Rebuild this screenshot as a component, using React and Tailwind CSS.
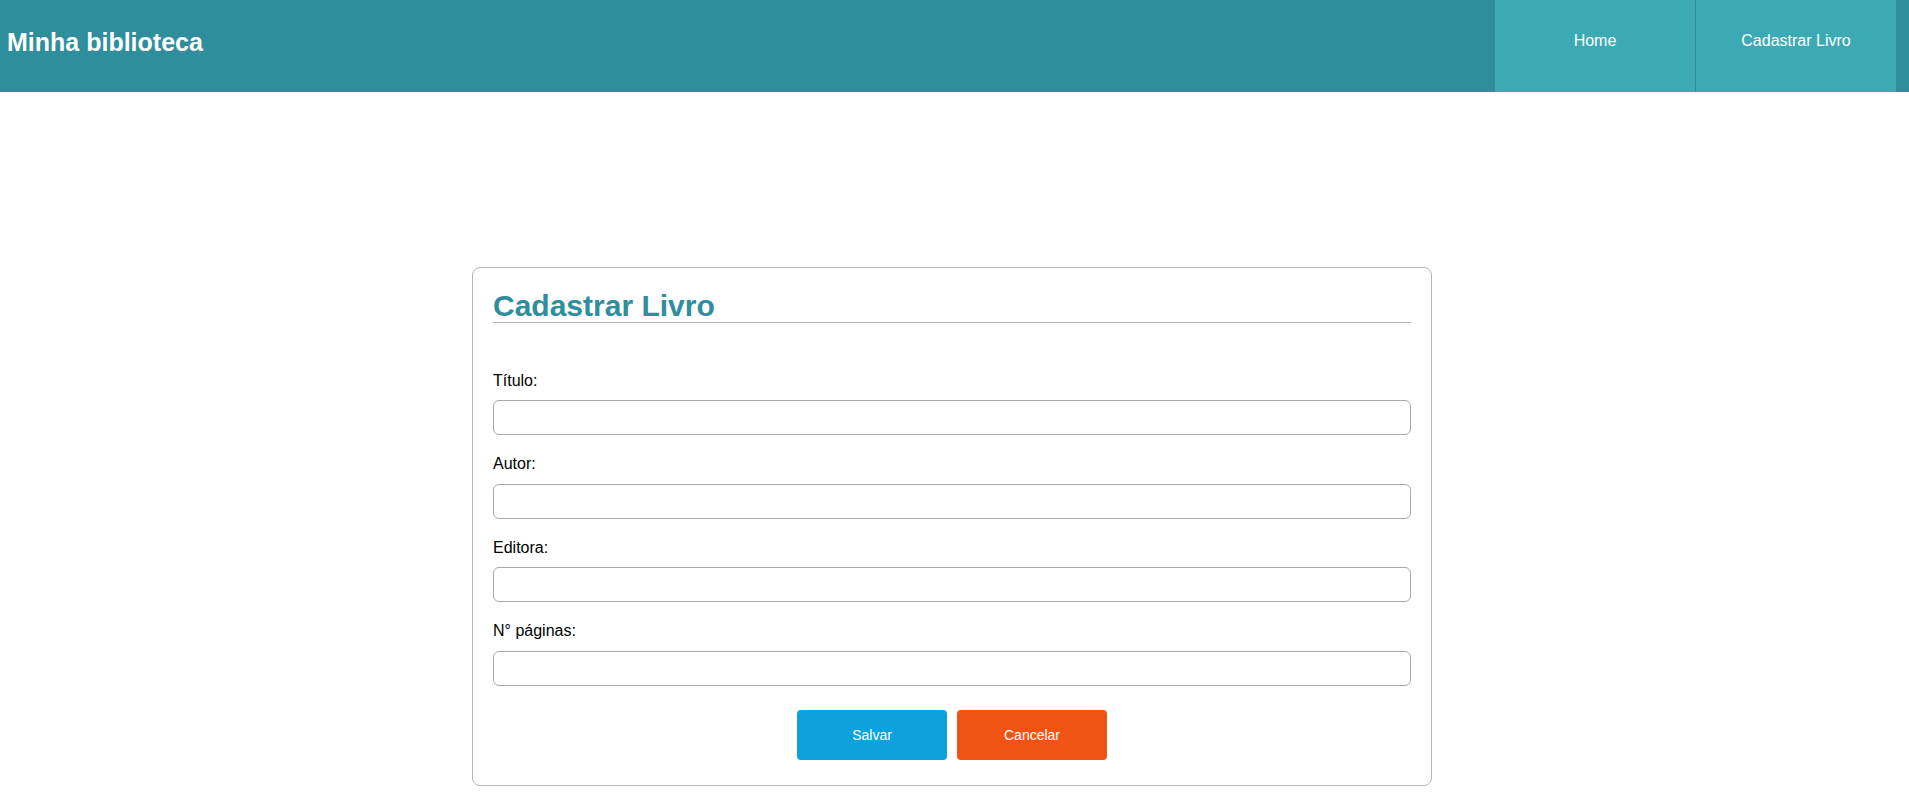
export default function App() {
  const campos = ["Título:", "Autor:", "Editora:", "N° páginas:"]

  return (
    <div className="min-h-screen bg-white font-['Liberation_Sans',Arial,sans-serif] text-black">
      <header className="flex h-[92px] bg-[#2e8e9c] pr-[13px]">
        <div className="flex flex-1 items-center pl-[7px] pb-[6px]">
          <h1 className="text-[25px] font-bold text-white">Minha biblioteca</h1>
        </div>
        <nav className="flex">
          <a className="flex w-[201px] items-center justify-center border-r border-[#2e8e9c] bg-[#3baab5] pb-[10px] text-base text-white">
            Home
          </a>
          <a className="flex w-[200px] items-center justify-center bg-[#3baab5] pb-[10px] text-base text-white">
            Cadastrar Livro
          </a>
        </nav>
      </header>

      <main className="mt-[175px] flex justify-center pr-[5px]">
        <div className="w-[960px] rounded-[8px] border border-[#b5b5b5] px-[20px] pt-[20px] pb-[25px]">
          <h2 className="mb-[49px] h-[35px] border-b border-[#b0b0b0] text-[30px] font-bold leading-[35px] text-[#2e8e9c]">
            Cadastrar Livro
          </h2>
          <form className="flex flex-col">
            {campos.map((c) => (
              <div key={c} className="mb-[20px]">
                <label className="mb-[10px] block text-[16px] leading-[18.4px]">{c}</label>
                <input
                  type="text"
                  className="block h-[35px] w-full rounded-[6px] border border-[#a9a9a9] px-2 outline-none"
                />
              </div>
            ))}
            <div className="mt-[4px] flex justify-center gap-[10px]">
              <button
                type="button"
                className="h-[50px] w-[150px] rounded-[4px] bg-[#0ea2dc] text-sm text-white"
              >
                Salvar
              </button>
              <button
                type="button"
                className="h-[50px] w-[150px] rounded-[4px] bg-[#f05414] text-sm text-white"
              >
                Cancelar
              </button>
            </div>
          </form>
        </div>
      </main>
    </div>
  )
}
